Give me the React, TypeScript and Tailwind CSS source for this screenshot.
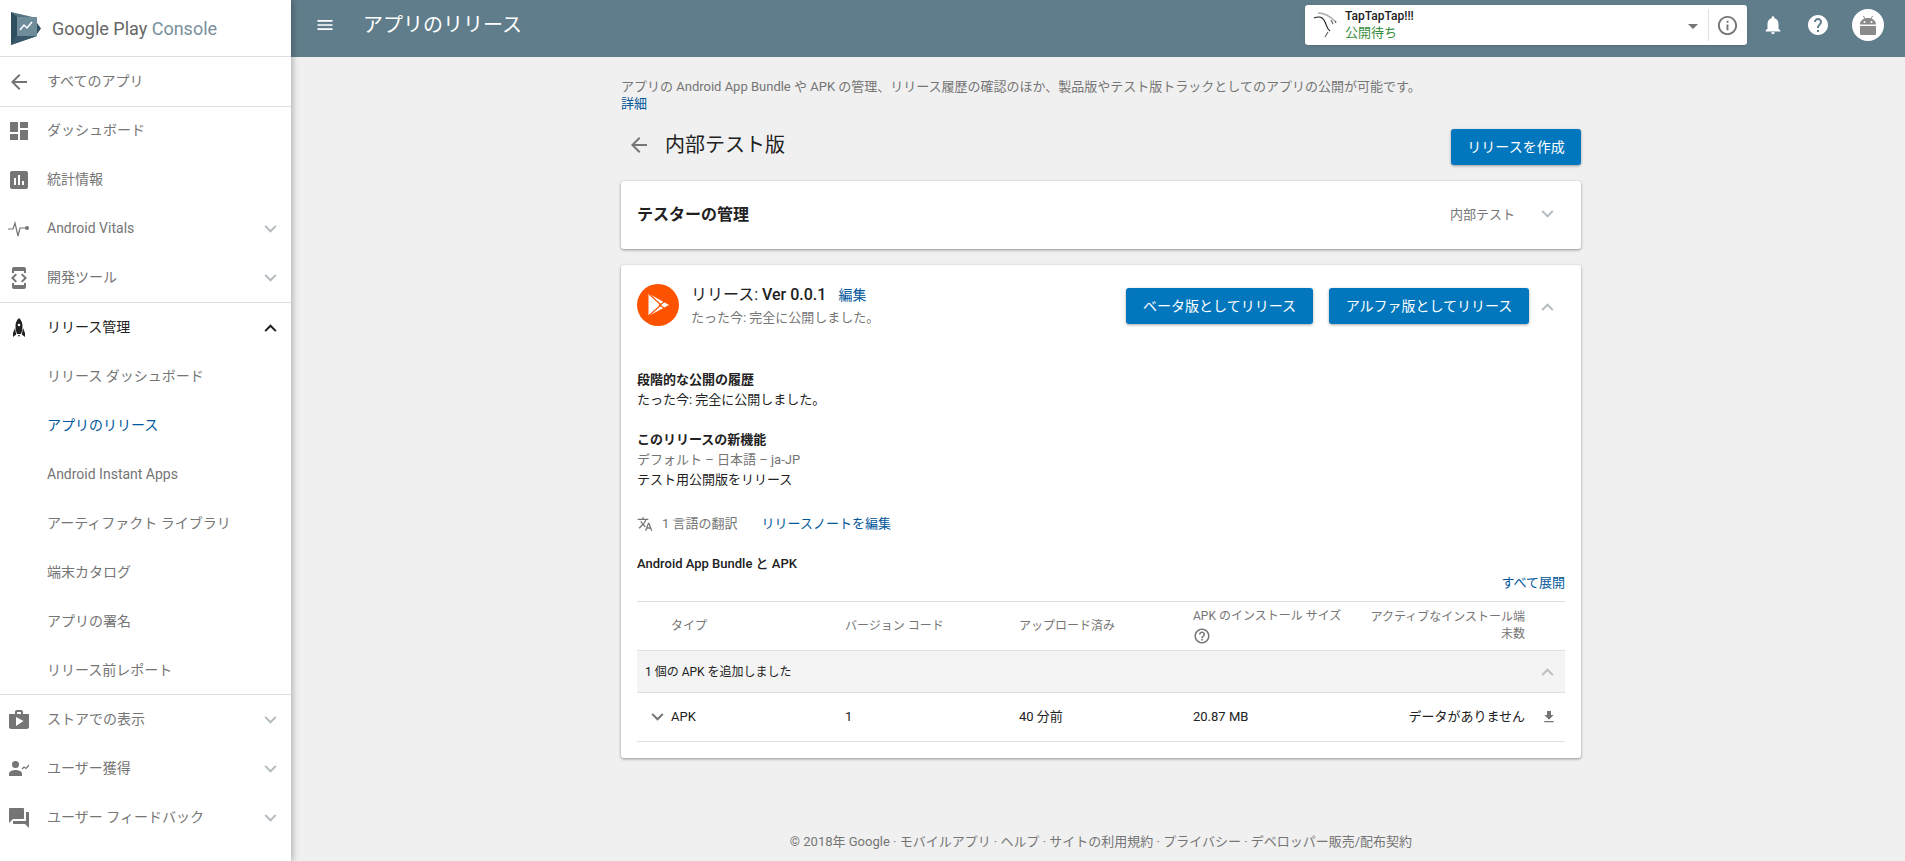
import React from 'react';

const font = "[font-family:Roboto,'Noto_Sans_CJK_JP',sans-serif]";

const P: Record<string, string> = {
  back: 'M20 11H7.83l5.59-5.59L12 4l-8 8 8 8 1.41-1.41L7.83 13H20v-2z',
  dashboard: 'M3 13h8V3H3v10zm0 8h8v-6H3v6zm10 0h8V11h-8v10zm0-18v6h8V3h-8z',
  stats: 'M19 3H5c-1.1 0-2 .9-2 2v14c0 1.1.9 2 2 2h14c1.1 0 2-.9 2-2V5c0-1.1-.9-2-2-2zM9 17H7v-7h2v7zm4 0h-2V7h2v10zm4 0h-2v-4h2v4z',
  dev: 'M7 5h10v2h2V3c0-1.1-.9-1.99-2-1.99L7 1c-1.1 0-2 .9-2 2v4h2V5zm8.41 11.59L20 12l-4.59-4.59L14 8.83 17.17 12 14 15.17l1.41 1.42zM10 15.17L6.83 12 10 8.83 8.59 7.41 4 12l4.59 4.59L10 15.17zM17 19H7v-2H5v4c0 1.1.9 2 2 2h10c1.1 0 2-.9 2-2v-4h-2v2z',
  shop: 'M16 6V4c0-1.11-.89-2-2-2h-4c-1.11 0-2 .89-2 2v2H2v13c0 1.11.89 2 2 2h16c1.11 0 2-.89 2-2V6h-6zm-6-2h4v2h-4V4zM9 18V9l7.5 4L9 18z',
  feedback: 'M21 6h-2v9H6v2c0 .55.45 1 1 1h11l4 4V7c0-.55-.45-1-1-1zm-4 6V3c0-.55-.45-1-1-1H3c-.55 0-1 .45-1 1v14l4-4h10c.55 0 1-.45 1-1z',
  bell: 'M12 22c1.1 0 2-.9 2-2h-4c0 1.1.89 2 2 2zm6-6v-5c0-3.07-1.64-5.64-4.5-6.32V4c0-.83-.67-1.5-1.5-1.5s-1.5.67-1.5 1.5v.68C7.63 5.36 6 7.92 6 11v5l-2 2v1h16v-1l-2-2z',
  help: 'M12 2C6.48 2 2 6.48 2 12s4.48 10 10 10 10-4.48 10-10S17.52 2 12 2zm1 17h-2v-2h2v2zm2.07-7.75l-.9.92C13.45 12.9 13 13.5 13 15h-2v-.5c0-1.1.45-2.1 1.17-2.83l1.24-1.26c.37-.36.59-.86.59-1.41 0-1.1-.9-2-2-2s-2 .9-2 2H8c0-2.21 1.79-4 4-4s4 1.79 4 4c0 .88-.36 1.68-.93 2.25z',
  info: 'M11 17h2v-6h-2v6zm1-15C6.48 2 2 6.48 2 12s4.48 10 10 10 10-4.48 10-10S17.52 2 12 2zm0 18c-4.41 0-8-3.59-8-8s3.59-8 8-8 8 3.59 8 8-3.59 8-8 8zM11 9h2V7h-2v2z',
  translate: 'M12.87 15.07l-2.54-2.51.03-.03c1.74-1.94 2.98-4.17 3.71-6.53H17V4h-7V2H8v2H1v1.99h11.17C11.5 7.92 10.44 9.75 9 11.35 8.07 10.32 7.3 9.19 6.69 8h-2c.73 1.63 1.73 3.17 2.98 4.56l-5.09 5.02L4 19l5-5 3.11 3.11.76-2.04zM18.5 10h-2L12 22h2l1.12-3h4.75L21 22h2l-4.5-12zm-2.62 7l1.62-4.33L19.12 17h-3.24z',
  download: 'M19 9h-4V3H9v6H5l7 7 7-7zM5 18v2h14v-2H5z',
  helpOutline: 'M11 18h2v-2h-2v2zm1-16C6.48 2 2 6.48 2 12s4.48 10 10 10 10-4.48 10-10S17.52 2 12 2zm0 18c-4.41 0-8-3.59-8-8s3.59-8 8-8 8 3.59 8 8-3.59 8-8 8zm0-14c-2.21 0-4 1.79-4 4h2c0-1.1.9-2 2-2s2 .9 2 2c0 2-3 1.75-3 5h2c0-2.25 3-2.5 3-5 0-2.21-1.79-4-4-4z',
  menu: 'M3 18h18v-2H3v2zm0-5h18v-2H3v2zm0-7v2h18V6H3z',
};

const Icon = ({ d, className }: { d: string; className: string }) => (
  <svg viewBox="0 0 24 24" className={className} fill="currentColor">
    <path d={d} />
  </svg>
);

const Chevron = ({ up, className }: { up?: boolean; className: string }) => (
  <svg viewBox="0 0 14 9" className={className} fill="none" stroke="currentColor" strokeWidth="2.3">
    <polyline points={up ? '1,8 7,2 13,8' : '1,1 7,7 13,1'} />
  </svg>
);

const VitalsIcon = () => (
  <svg viewBox="0 0 22 16" className="w-[22px] h-[16px] ml-[8px] text-[#757575]" fill="none" stroke="currentColor" strokeWidth="1.2">
    <polyline points="0,8 5,8 7,2 10,15 12,7 18,7" />
    <circle cx="19" cy="7" r="2" fill="currentColor" stroke="none" />
  </svg>
);

const AcquireIcon = () => (
  <svg viewBox="0 0 20 15" className="w-[20px] h-[15px] ml-[9px] text-[#757575]" fill="currentColor">
    <circle cx="6.5" cy="3.5" r="3.5" />
    <path d="M0 15v-2.500c0-2.500 4.300-3.500 6.500-3.500s6.500 1 6.500 3.500V15z" />
    <polyline points="13,8 15,6 17,7.500 20,4" fill="none" stroke="currentColor" strokeWidth="1.2" />
  </svg>
);

const RocketIcon = () => (
  <svg viewBox="0 0 12 19" className="w-[12px] h-[19px] ml-[13px] text-[#212121]" fill="currentColor">
    <path
      fillRule="evenodd"
      d="M6 0C3.500 2 2.500 5 2.500 8c0 3 .7 6 1.500 8h4c.8-2 1.500-5 1.500-8C9.500 5 8.500 2 6 0zm0 5.700a1.300 1.300 0 1 1 0 2.600 1.300 1.300 0 0 1 0-2.600z"
    />
    <path d="M2 10L0 15v4l3.200-2.500zM10 10l2 5v4l-3.200-2.500zM5 17h2l-1 2z" />
  </svg>
);

const Logo = () => (
  <svg viewBox="0 0 32 33" className="w-[32px] h-[33px]">
    <path d="M1 0 L27 6 V24 L1 33 Z" fill="#547483" />
    <path d="M27 11 L31 16.500 L27 22 Z" fill="#2f4f60" />
    <rect x="7" y="5" width="20" height="19" fill="#6f8c9a" />
    <path d="M7 24 L27 24 L1 33 Z" fill="#3a5a6b" />
    <path d="M1 0 V33 L7 24 V5 Z" fill="#2f4f60" />
    <polyline points="10,18 14,13 17,16 22,10" fill="none" stroke="#fff" strokeWidth="1.5" />
  </svg>
);

const AppIcon = () => (
  <svg viewBox="0 0 26 30" className="w-[26px] h-[30px]" fill="none" stroke="#222" strokeWidth="1.2">
    <path d="M1 8c5-2 9-1 11 4 2 4 2 7 5 9" />
    <path d="M5 3c6 0 12 3 18 9" stroke="#aaa" strokeWidth="1.5" />
    <path d="M12 27l3-5M18 10l2 4M22 11l1 2" stroke="#666" />
  </svg>
);

const ReleaseIcon = () => (
  <svg viewBox="0 0 42 42" className="w-[42px] h-[42px] shrink-0">
    <circle cx="21" cy="21" r="21" fill="#fd5200" />
    <path d="M11.500 9.500L32 21 11.500 32z" fill="#fff" />
    <path d="M11.500 9.500L24 21 11.500 32M27 18l-4.500 3 4.500 3" fill="none" stroke="#fd5200" strokeWidth="1.2" />
  </svg>
);

const AndroidAvatar = () => (
  <div className="w-[32px] h-[32px] rounded-full bg-white flex items-center justify-center ml-[22px]">
    <svg viewBox="0 0 16 19" className="w-[16px] h-[19px]" fill="#8a8a8a">
      <path fillRule="evenodd" d="M0 8.500c0-4 3.500-6.500 8-6.500s8 2.500 8 6.500zM4.500 5a1 1 0 1 0 0 2 1 1 0 0 0 0-2zm7 0a1 1 0 1 0 0 2 1 1 0 0 0 0-2z" />
      <path d="M3.500 0l1.500 3M12.500 0l-1.500 3" stroke="#8a8a8a" strokeWidth="1" />
      <path d="M0 10h16v8a1 1 0 0 1-1 1H1a1 1 0 0 1-1-1z" />
    </svg>
  </div>
);

type NavItem = { label: string; icon?: React.ReactNode; chevron?: boolean; open?: boolean; active?: boolean };

const bigIcon = 'w-[24px] h-[24px] ml-[7px] text-[#757575]';

const topNav: NavItem[] = [
  { label: 'ダッシュボード', icon: <Icon d={P.dashboard} className={bigIcon} /> },
  { label: '統計情報', icon: <Icon d={P.stats} className={bigIcon} /> },
  { label: 'Android Vitals', icon: <VitalsIcon />, chevron: true },
  { label: '開発ツール', icon: <Icon d={P.dev} className={bigIcon} />, chevron: true },
];

const releaseNav: NavItem[] = [
  { label: 'リリース管理', icon: <RocketIcon />, open: true },
  { label: 'リリース ダッシュボード' },
  { label: 'アプリのリリース', active: true },
  { label: 'Android Instant Apps' },
  { label: 'アーティファクト ライブラリ' },
  { label: '端末カタログ' },
  { label: 'アプリの署名' },
  { label: 'リリース前レポート' },
];

const bottomNav: NavItem[] = [
  { label: 'ストアでの表示', icon: <Icon d={P.shop} className={bigIcon} />, chevron: true },
  { label: 'ユーザー獲得', icon: <AcquireIcon />, chevron: true },
  { label: 'ユーザー フィードバック', icon: <Icon d={P.feedback} className={bigIcon} />, chevron: true },
];

const NavRow = ({ item }: { item: NavItem }) => {
  const color = item.active ? 'text-[#01579b]' : item.open ? 'text-[#212121]' : 'text-[#757575]';
  return (
    <div className="flex items-center h-[49px] text-[14px]">
      <div className="w-[47px] shrink-0">{item.icon}</div>
      <span className={color}>{item.label}</span>
      {item.chevron && <Chevron className="w-[13px] h-[8px] ml-auto mr-[14px] text-[#b5bcc0]" />}
      {item.open && <Chevron up className="w-[13px] h-[8px] ml-auto mr-[14px] text-[#212121]" />}
    </div>
  );
};

const Sidebar = () => (
  <aside className="w-[291px] shrink-0 bg-white shadow-[2px_0_6px_rgba(0,0,0,0.25)] z-10 flex flex-col">
    <div className="h-[57px] flex items-center pl-[10px] border-b border-[#e0e0e0]">
      <Logo />
      <span className="ml-[10px] text-[18px] text-[#666666]">
        Google Play <span className="text-[#78909c]">Console</span>
      </span>
    </div>
    <div className="h-[50px] flex items-center border-b border-[#e0e0e0] text-[14px] text-[#757575]">
      <div className="w-[47px]">
        <Icon d={P.back} className="w-[24px] h-[24px] ml-[7px]" />
      </div>
      すべてのアプリ
    </div>
    <div className="-mt-px border-b border-[#e0e0e0]">
      {topNav.map((item) => (
        <NavRow key={item.label} item={item} />
      ))}
    </div>
    <div className="h-[392px] border-b border-[#e0e0e0]">
      {releaseNav.map((item) => (
        <NavRow key={item.label} item={item} />
      ))}
    </div>
    {bottomNav.map((item) => (
      <NavRow key={item.label} item={item} />
    ))}
  </aside>
);

const Header = () => (
  <header className="h-[57px] shrink-0 bg-[#607d8b] flex items-center pb-[7px] pl-[24px] pr-[21px] text-white">
    <Icon d={P.menu} className="w-[20px] h-[20px]" />
    <h1 className="ml-[28px] text-[20px] font-normal">アプリのリリース</h1>
    <div className="ml-auto w-[442px] h-[40px] bg-white rounded-[3px] shadow-sm flex items-center pl-[8px] pr-[8px]">
      <AppIcon />
      <div className="ml-[6px] flex flex-col">
        <span className="text-[12px] leading-[15px] font-medium text-[#212121] mt-[1px]">TapTapTap!!!</span>
        <span className="text-[13px] leading-[18px] text-[#388e3c]">公開待ち</span>
      </div>
      <span className="ml-auto w-0 h-0 border-l-[5px] border-r-[5px] border-t-[5px] border-l-transparent border-r-transparent border-t-[#757575] mr-[10px] mt-[3px]" />
      <span className="w-px h-[32px] bg-[#e0e0e0] mr-[7px]" />
      <Icon d={P.info} className="w-[23px] h-[23px] text-[#757575]" />
    </div>
    <Icon d={P.bell} className="ml-[15px] w-[22px] h-[22px]" />
    <Icon d={P.help} className="ml-[22px] w-[24px] h-[24px]" />
    <AndroidAvatar />
  </header>
);

const BlueButton = ({ children, className }: { children: React.ReactNode; className: string }) => (
  <button className={`h-[36px] bg-[#0277bd] rounded-[3px] text-white text-[14px] shadow-[0_1px_3px_rgba(0,0,0,0.35)] ${className}`}>
    {children}
  </button>
);

const Card = ({ children, className }: { children: React.ReactNode; className: string }) => (
  <section className={`bg-white rounded-[3px] shadow-[0_1px_3px_rgba(0,0,0,0.4)] ${className}`}>{children}</section>
);

const tableCols = 'grid grid-cols-[34px_174px_174px_174px_176px_156px_40px]';

const ReleaseTable = () => (
  <div className="mt-[8px] text-[13px]">
    <div className={`${tableCols} h-[50px] border-y border-[#e0e0e0] items-center text-[12px] leading-[17px] text-[#757575]`}>
      <span />
      <span>タイプ</span>
      <span>バージョン コード</span>
      <span>アップロード済み</span>
      <span>
        APK のインストール サイズ
        <Icon d={P.helpOutline} className="w-[18px] h-[18px] mt-[2px]" />
      </span>
      <span className="text-right">
        アクティブなインストール端
        <br />
        未数
      </span>
      <span />
    </div>
    <div className="h-[42px] bg-[#f4f4f4] border-b border-[#e0e0e0] flex items-center pl-[8px] pr-[11px] text-[12px] text-[#212121]">
      1 個の APK を追加しました
      <Chevron up className="ml-auto w-[13px] h-[8px] text-[#bdbdbd]" />
    </div>
    <div className={`${tableCols} h-[49px] border-b border-[#e0e0e0] items-center text-[#212121]`}>
      <Chevron className="w-[13px] h-[8px] ml-[14px] text-[#757575]" />
      <span>APK</span>
      <span>1</span>
      <span>40 分前</span>
      <span>20.87 MB</span>
      <span className="text-right">データがありません</span>
      <Icon d={P.download} className="w-[16px] h-[16px] ml-[16px] text-[#757575]" />
    </div>
  </div>
);

const ReleaseCard = () => (
  <Card className="mt-[16px] h-[493px] px-[16px]">
    <div className="flex items-start pt-[19px]">
      <ReleaseIcon />
      <div className="ml-[12px]">
        <div className="text-[16px] leading-[22px] text-[#212121]">
          リリース: <span className="font-medium">Ver 0.0.1</span>
          <span className="ml-[12px] text-[14px] text-[#01579b]">編集</span>
        </div>
        <div className="text-[13px] leading-[20px] text-[#757575] mt-[2px]">たった今: 完全に公開しました。</div>
      </div>
      <BlueButton className="ml-auto mt-[4px] w-[187px]">ベータ版としてリリース</BlueButton>
      <BlueButton className="ml-[16px] mt-[4px] w-[200px]">アルファ版としてリリース</BlueButton>
      <Chevron up className="ml-[12px] mr-[11px] mt-[19px] w-[13px] h-[8px] text-[#b5bcc0]" />
    </div>
    <div className="mt-[42px] text-[13px] leading-[20px] text-[#212121]">
      <p className="font-bold">段階的な公開の履歴</p>
      <p>たった今: 完全に公開しました。</p>
      <p className="font-bold mt-[20px]">このリリースの新機能</p>
      <p className="text-[#757575]">デフォルト – 日本語 – ja-JP</p>
      <p>テスト用公開版をリリース</p>
    </div>
    <div className="mt-[24px] flex items-center text-[13px] leading-[20px] text-[#757575]">
      <Icon d={P.translate} className="w-[16px] h-[16px]" />
      <span className="ml-[9px]">1 言語の翻訳</span>
      <span className="ml-[24px] text-[#01579b]">リリースノートを編集</span>
    </div>
    <div className="mt-[20px] text-[13px] leading-[20px] font-medium text-[#212121]">Android App Bundle と APK</div>
    <div className="-mt-px text-right text-[13px] leading-[20px] text-[#01579b]">すべて展開</div>
    <ReleaseTable />
  </Card>
);

const Content = () => (
  <main className="flex-1 flex flex-col ml-[330px] w-[960px]">
    <p className="pt-[21px] text-[13px] leading-[17px] text-[#757575]">
      アプリの Android App Bundle や APK の管理、リリース履歴の確認のほか、製品版やテスト版トラックとしてのアプリの公開が可能です。
      <br />
      <span className="text-[#01579b]">詳細</span>
    </p>
    <div className="mt-[17px] flex items-center">
      <Icon d={P.back} className="ml-[6px] w-[24px] h-[24px] text-[#757575] mb-[4px]" />
      <h2 className="ml-[14px] text-[20px] font-normal text-[#212121] mb-[4px]">内部テスト版</h2>
      <BlueButton className="ml-auto w-[130px]">リリースを作成</BlueButton>
    </div>
    <Card className="mt-[16px] h-[68px] flex items-center pl-[16px] pr-[27px]">
      <span className="text-[16px] font-bold text-[#212121]">テスターの管理</span>
      <span className="ml-auto text-[13px] text-[#757575]">内部テスト</span>
      <Chevron className="ml-[26px] w-[13px] h-[8px] mb-[2px] text-[#b5bcc0]" />
    </Card>
    <ReleaseCard />
    <footer className="mt-auto pb-[10px] text-center text-[13px] text-[#757575]">
      © 2018年 Google · モバイルアプリ · ヘルプ · サイトの利用規約 · プライバシー · デベロッパー販売/配布契約
    </footer>
  </main>
);

export default function App() {
  return (
    <div className={`flex h-screen overflow-hidden bg-[#f0f0f0] ${font}`}>
      <Sidebar />
      <div className="flex-1 flex flex-col min-w-0">
        <Header />
        <div className="flex-1 flex flex-col -ml-[291px] pl-[291px]">
          <Content />
        </div>
      </div>
    </div>
  );
}
